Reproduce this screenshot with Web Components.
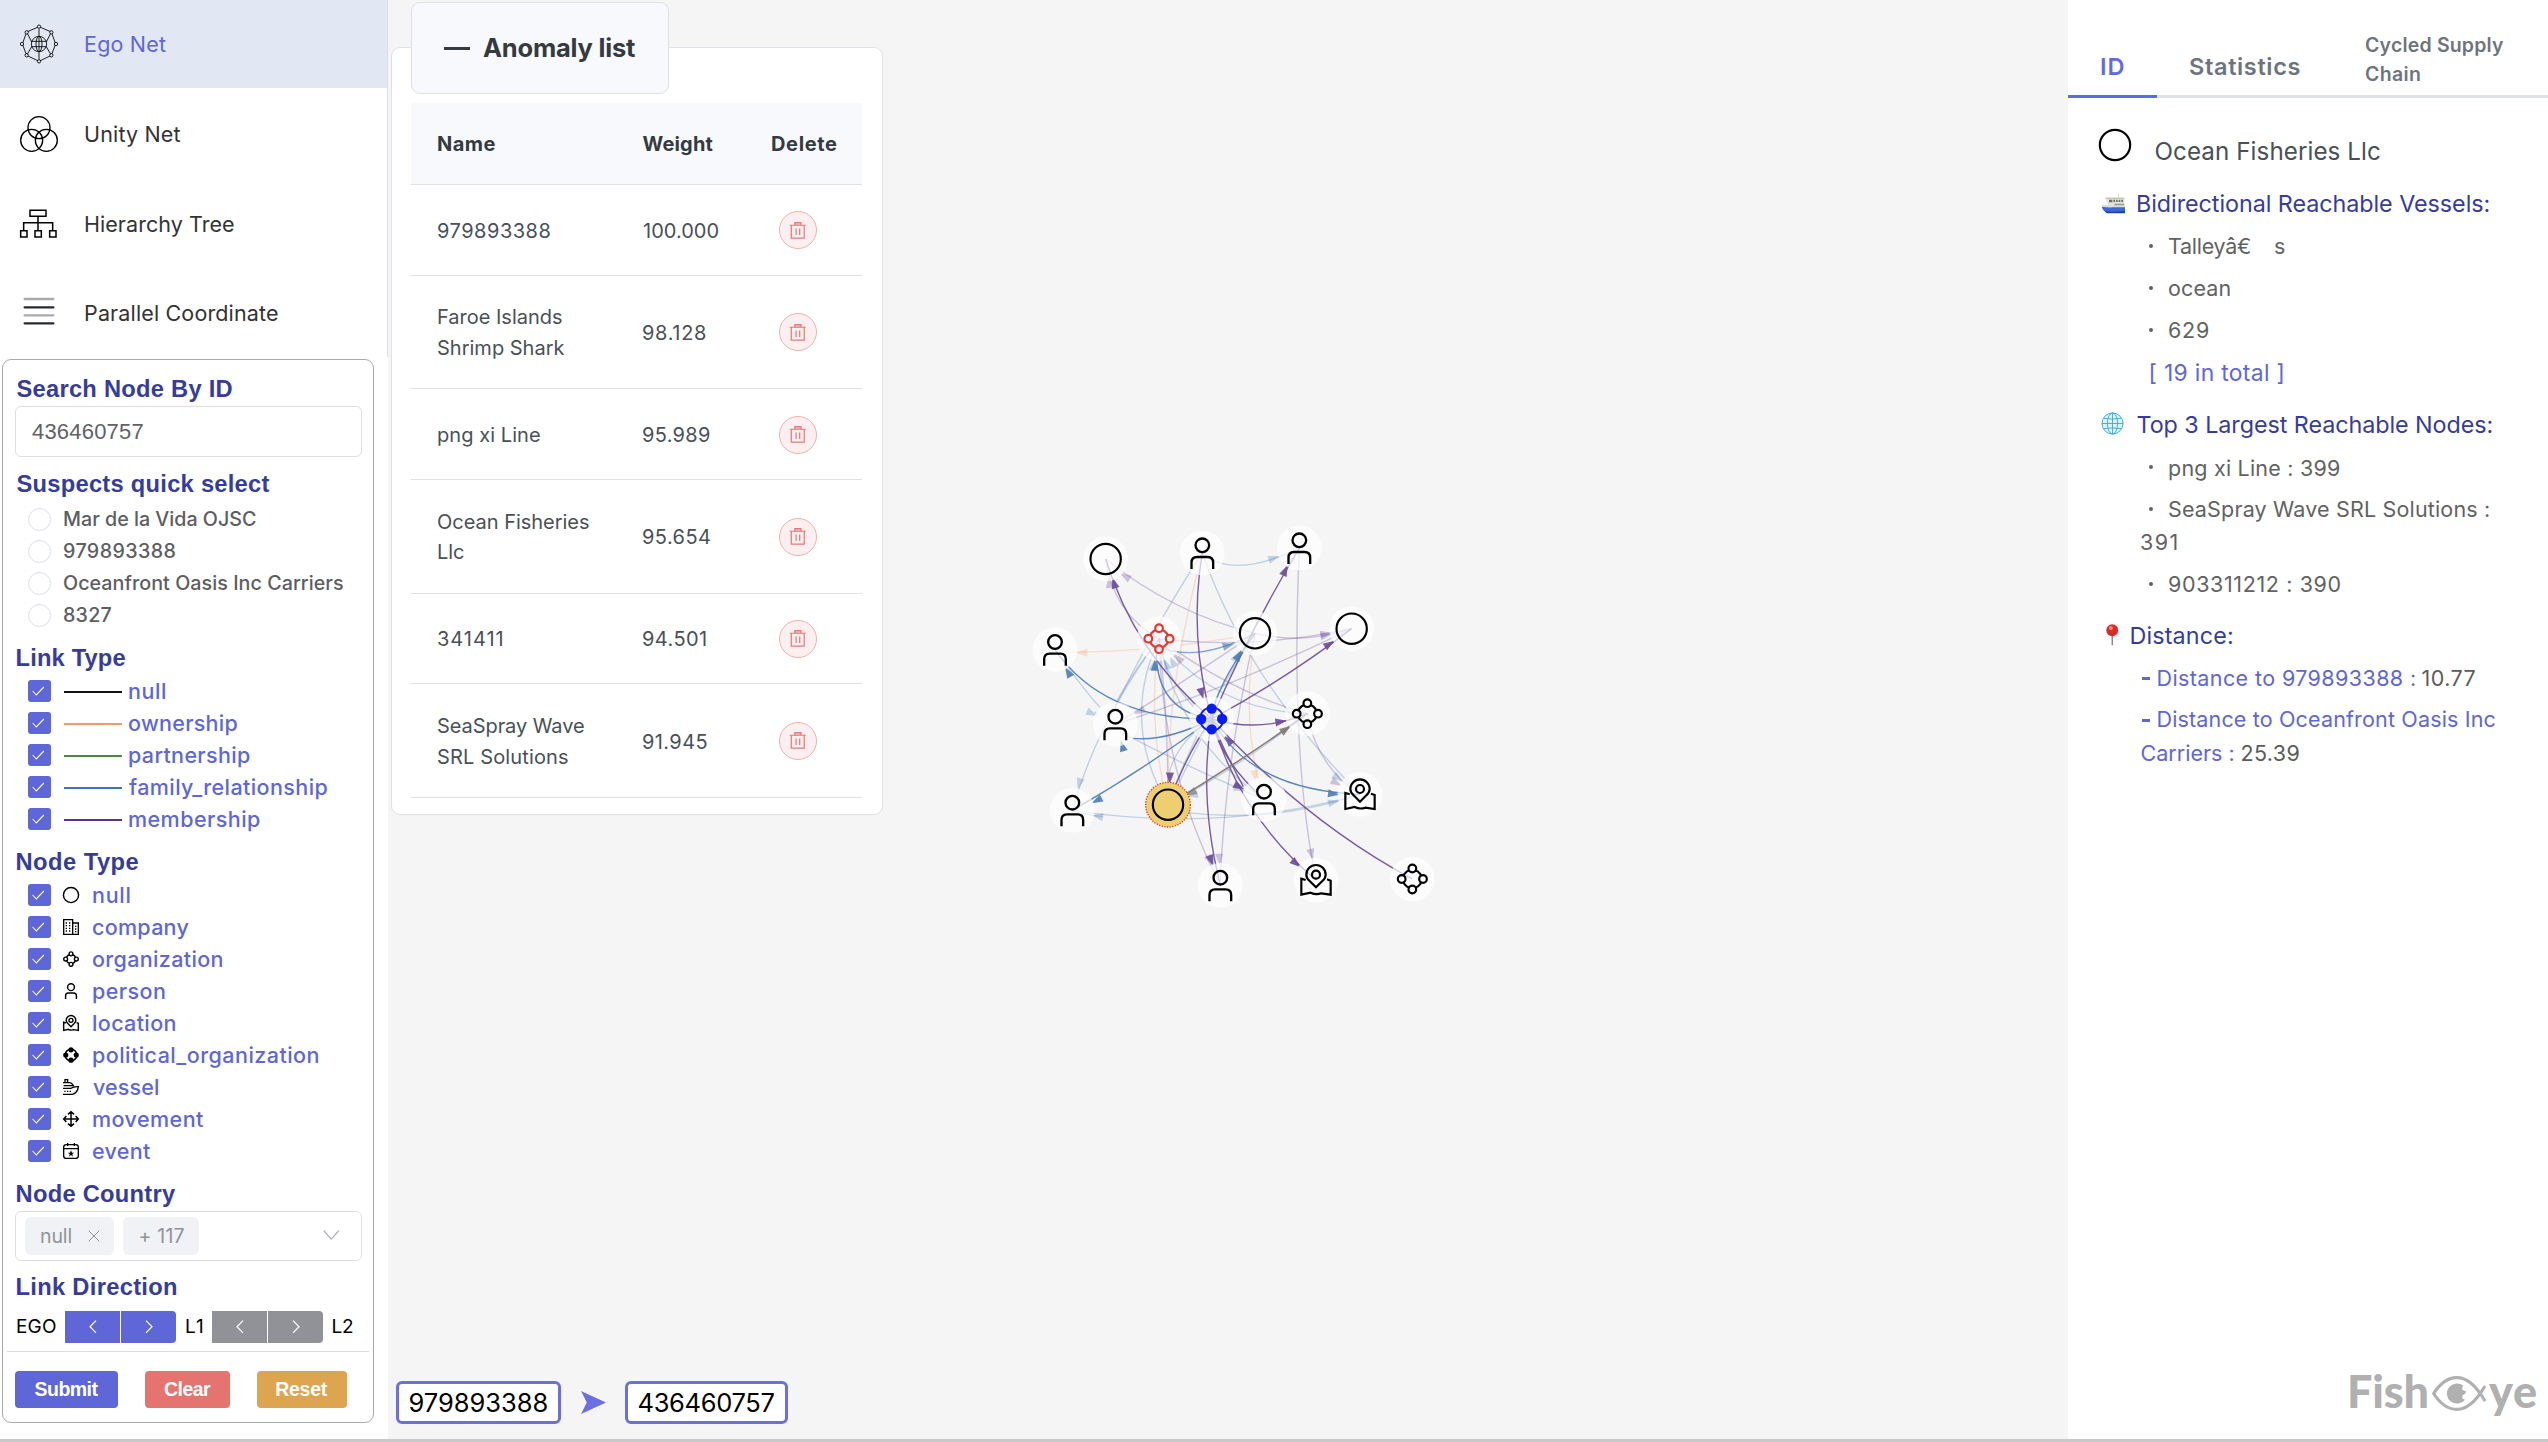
<!DOCTYPE html>
<html lang="en">
<head>
<meta charset="utf-8">
<title>FishEye - Ego Net</title>
<style>
html,body{margin:0;height:100%;background:#fff}
body{font-family:Inter,"Noto Sans",sans-serif;overflow:hidden}
</style>
</head>
<body>
<fish-app></fish-app>
<script>
const pen = document.createElement('canvas').getContext('2d');

/* Text whose drawn width is set: letter spacing takes up the difference. */
class FitText extends HTMLElement {
  connectedCallback() {
    if (!this.shadowRoot) {
      this.attachShadow({mode: 'open'}).innerHTML =
        '<style>:host{display:block;white-space:pre;flex:none;line-height:1.2;padding-top:var(--drop,2px)}span{display:block}</style><span><slot></slot></span>';
    }
    const w = parseFloat(this.getAttribute('w'));
    const cs = getComputedStyle(this);
    const text = this.textContent;
    pen.font = `${cs.fontWeight} ${cs.fontSize} ${cs.fontFamily}`;
    const m = pen.measureText(text);
    const ink = m.actualBoundingBoxLeft + m.actualBoundingBoxRight;
    const span = this.shadowRoot.querySelector('span');
    this.style.width = w + 'px';
    span.style.marginLeft = m.actualBoundingBoxLeft + 'px';
    if (text.length > 1) span.style.letterSpacing = ((w - ink) / (text.length - 1)).toFixed(3) + 'px';
  }
}

const SHAPES = {
  circle: '<circle r="45.5" stroke-width="6.5"/>',
  person: '<circle cy="-23" r="20.5" stroke-width="7"/><path stroke-width="7" d="M-32.5 48V29Q-32.5 12-16 12H16Q32.5 12 32.5 29V48"/>',
  org: '<g stroke-width="6.5"><circle cy="-31.500" r="11.500"/><circle cx="32" r="11.500"/><circle cy="31.500" r="11.500"/><circle cx="-32" r="11.500"/><path d="M10-25L16-23L24-15L26-9M26 9L24 15L16 23L10 25M-10 25L-16 23L-24 15L-26 9M-26-9L-24-15L-16-23L-10-25"/></g>',
  politic: '<g fill="currentColor" stroke="none"><circle cy="-31" r="15.500"/><circle cx="31.500" r="15.500"/><circle cy="31" r="15.500"/><circle cx="-31.500" r="15.500"/></g><circle r="35" stroke-width="5.500"/>',
  location: '<g stroke-width="6.5"><circle cy="-16" r="12"/><path d="M0 22L-19 3Q-29-6-29-16A29 29 0 0 1 29-16Q29-6 19 3Z"/><path d="M-31 0L-44 -4V44L-16 38Q0 46 16 40L44 44V2L33-2"/></g>'
};
const ICONS = {
  ...Object.fromEntries(Object.entries(SHAPES).map(([k, v]) => [k, ['-48 -48 96 96', v]])),
  ego: ['-60 -60 120 120', `<g stroke-width="2.6"><circle r="23"/><ellipse rx="9" ry="23"/><path d="M0-46V46M-22-8H22M-22 8H22M0-52L-37-36L-50 0L-37 34L0 52L37 34L50 0L37-36ZM-37-36L-22-6M-37 34L-22 8M37-36L22-6M37 34L22 8"/></g><g stroke-width="2.6" fill="#e1e8f4"><circle cy="-52" r="5"/><circle cy="52" r="5"/><circle cx="-51" r="5"/><circle cx="51" r="5"/><circle cx="-37" cy="-35" r="5"/><circle cx="37" cy="-35" r="5"/><circle cx="-37" cy="34" r="5"/><circle cx="37" cy="34" r="5"/></g>`],
  unity: ['-60 -60 120 120', '<g stroke-width="4"><circle cy="-19" r="33"/><circle cx="-22" cy="19" r="33"/><circle cx="22" cy="19" r="33"/></g>'],
  tree: ['-60 -60 120 120', '<path stroke-width="4.500" d="M-27-41H21V-23H-27ZM-3-23V20M-46 20V-4H41V20M-55 20H-36V39H-55ZM-12 20H7V39H-12ZM32 20H51V39H32Z"/>'],
  lines: ['-60 -60 120 120', '<g stroke-width="7" stroke-linecap="round"><path stroke="#aaa" d="M-43-42H43M-43 7H43"/><path stroke="#262a33" d="M-43-17H43M-43 31H43"/></g>'],
  company: ['0 0 48 48', '<path stroke-width="4" d="M2 46V2H29V46ZM29 12H46V46H29"/><path stroke-width="4" stroke-dasharray="4 4" d="M10 10V40M20 10V40"/><path stroke-width="4" stroke-dasharray="4 4" d="M38 20V40"/>'],
  vessel: ['0 0 48 48', '<path stroke-width="4" d="M0 11H20Q27 12 31 20H2M6 10V2H14V10M0 28H24Q32 22 46 23Q44 42 28 46H0"/><path stroke-width="4" stroke-dasharray="4 4" d="M4 37H24"/>'],
  movement: ['0 0 48 48', '<path stroke-width="4.500" d="M24 2V46M2 24H46M15 10L24 2L33 10M15 38L24 46L33 38M10 15L2 24L10 33M38 15L46 24L38 33"/>'],
  event: ['0 0 48 48', '<path stroke-width="4" d="M10 5H38Q46 5 46 13V38Q46 46 38 46H10Q2 46 2 38V13Q2 5 10 5ZM2 17H46M14 0V9M34 0V9"/><path fill="currentColor" stroke="none" d="M24 22L27 29H34L28 33L30 41L24 36L18 41L20 33L14 29H21Z"/>'],
  trash: ['0 0 54 54', '<g stroke-width="3.800"><path d="M2 10H52M7 10V50H47V10M22 20V40M33 20V40"/><path fill="currentColor" fill-opacity=".45" d="M18 10V2H37V10"/></g>'],
  check: ['0 0 38 30', '<path stroke-width="3.300" d="M2 15L13 27L36 3"/>'],
  left: ['0 0 24 40', '<path stroke-width="3.600" d="M21 2L3 20L21 38"/>'],
  right: ['0 0 24 40', '<path stroke-width="3.600" d="M3 2L21 20L3 38"/>'],
  down: ['0 0 50 32', '<path stroke-width="3.600" d="M2 2L25 29L48 2"/>'],
  close: ['0 0 36 36', '<path stroke-width="3" d="M2 2L34 34M34 2L2 34"/>'],
  dart: ['0 0 26 24', '<path fill="currentColor" stroke="none" d="M0 0L26 12L0 24L6 12Z"/>'],
  boat: ['0 0 72 66', `<g stroke="none"><rect x="52" y="0" width="2" height="14" fill="#d9d2c4"/><path fill="#e8e2d4" d="M14 14H70V42H22L18 28Z"/><path fill="#c9c1ae" d="M14 14H70V18H14Z"/><path fill="#5f7178" d="M24 20H34V28H24ZM37 20H42V27H37ZM45 20H50V27H45ZM53 20H58V27H53ZM61 20H66V27H61Z"/><path fill="#9aa29c" d="M40 32H70V37H40Z"/><path fill="#dcdad2" d="M2 36Q20 34 34 40H72V46H6Z"/><path fill="#3d69d8" d="M2 41Q20 44 36 43H72V60H18Q6 54 2 41Z"/><path fill="#1d3fa6" d="M12 55Q40 58 72 54V61H18Z"/></g>`],
  globe: ['-36 -36 72 72', '<circle r="34" fill="#d9f3fb" stroke="none"/><g stroke="#46acd0" stroke-width="3"><circle r="33"/><ellipse rx="16" ry="33"/><path d="M0-33V33M-33 0H33M-28-16Q0-12 28-16M-28 16Q0 12 28 16"/></g>'],
  pin: ['0 0 38 66', '<path stroke="#8d7a72" stroke-width="4" d="M19 32V64"/><circle cx="19" cy="19" r="18" fill="#dd2a28" stroke="none"/><circle cx="15" cy="12" r="6" fill="#f58d84" stroke="none"/>'],
  eye: ['0 0 168 108', '<g stroke-width="9.500" stroke-linecap="round"><path d="M5 54Q36 5 76 5Q120 5 160 74M5 54Q36 103 76 103Q120 103 160 34"/></g><path fill="currentColor" stroke="none" d="M96 30A31 31 0 1 0 101 73Q92 72 92 64Q92 58 99 56Q104 54 104 47Q92 46 92 38Q92 33 96 30Z"/>']
};

class FishIcon extends HTMLElement {
  connectedCallback() {
    const [box, body] = ICONS[this.getAttribute('name')];
    this.attachShadow({mode: 'open'}).innerHTML =
      `<style>:host{display:block;flex:none}svg{display:block;width:100%;height:100%;overflow:visible}
       :host([heavy]) svg[viewBox^="-48"] :is(circle,path){stroke-width:8.500px}</style>
       <svg viewBox="${box}" fill="none" stroke="currentColor" preserveAspectRatio="none">${body}</svg>`;
  }
}

class NavItem extends HTMLElement {
  connectedCallback() {
    this.attachShadow({mode: 'open'}).innerHTML = `<style>
      :host{display:flex;align-items:center;height:88px;padding-left:19px;gap:26px;color:#333;font-size:21.5px;margin-bottom:1.8px;box-sizing:border-box}
      :host([active]){background:#e1e8f4;color:#5e66d8}
      fish-icon{width:40px;height:40px;color:#000}
      </style><fish-icon name="${this.getAttribute('icon')}"></fish-icon><slot></slot>`;
  }
}

class CheckRow extends HTMLElement {
  connectedCallback() {
    const line = this.getAttribute('line'), icon = this.getAttribute('icon');
    this.attachShadow({mode: 'open'}).innerHTML = `<style>
      :host{display:flex;align-items:center;height:32px;padding-left:13px;color:#5e66d8;font-size:21.5px;font-weight:500}
      .box{width:23px;height:22px;border-radius:3px;background:#5e66d8;display:flex;align-items:center;justify-content:center}
      .box fish-icon{width:12.500px;height:10px;color:#fff;margin-right:2px}
      .line{width:58px;height:2.500px;margin:2px 7px 0 13px;background:${line}}
      .ico{width:16px;height:16px;color:#000;margin:0 14px 0 12px}
      </style><div class="box"><fish-icon name="check"></fish-icon></div>
      ${line ? '<div class="line"></div>' : `<fish-icon heavy class="ico" name="${icon}"></fish-icon>`}<slot></slot>`;
  }
}

class RadioRow extends HTMLElement {
  connectedCallback() {
    this.attachShadow({mode: 'open'}).innerHTML = `<style>
      :host{display:flex;align-items:center;height:32px;padding-left:13px;gap:13px;color:#5d5e61;font-size:19.700px;font-weight:500}
      i{width:23px;height:23px;border:1px solid #dcdfe6;border-radius:50%;box-sizing:border-box;background:#fff}
      </style><i></i><slot></slot>`;
  }
}

class ArrowPair extends HTMLElement {
  connectedCallback() {
    this.attachShadow({mode: 'open'}).innerHTML = `<style>
      :host{display:flex;width:111px;height:32px;gap:1px;color:#fff}
      div{flex:1;display:flex;align-items:center;justify-content:center;background:var(--tone)}
      div:first-child{border-radius:4px 0 0 4px}div:last-child{border-radius:0 4px 4px 0}
      fish-icon{width:8px;height:13.500px}
      </style><div><fish-icon name="left"></fish-icon></div><div><fish-icon name="right"></fish-icon></div>`;
  }
}

const fit = ([t, w]) => `<fit-text w="${w}">${t}</fit-text>`;

class FilterPanel extends HTMLElement {
  connectedCallback() {
    const links = [['null', 36, '#111'], ['ownership', 108.5, '#f39a6b'], ['partnership', 121, '#4a8a3c'], ['family_relationship', 198.5, '#3f74b5'], ['membership', 131, '#553293']];
    const nodes = [['null', 36.5, 'circle'], ['company', 95.5, 'company'], ['organization', 129.5, 'org'], ['person', 72, 'person'], ['location', 82.5, 'location'], ['political_organization', 225.5, 'politic'], ['vessel', 65, 'vessel'], ['movement', 110, 'movement'], ['event', 57, 'event']];
    const radios = [['Mar de la Vida OJSC', 192], ['979893388', 111.5], ['Oceanfront Oasis Inc Carriers', 279], ['8327', 47.5]];
    this.attachShadow({mode: 'open'}).innerHTML = `<style>
      :host{display:flex;flex-direction:column;box-sizing:border-box;width:372px;height:1064px;margin:2px 0 0 2px;border:1px solid #aaa;border-radius:9px;padding:13px 12px 0;background:#fff}
      h3{margin:0 0 3px 1.500px;height:30px;display:flex;align-items:center;font:bold 23.700px "Liberation Sans",Arial,sans-serif;color:#363c9c}
      .field{box-sizing:border-box;width:347px;border:1.500px solid #dcdfe6;border-radius:6px;display:flex;align-items:center}
      .input{height:51px;padding-left:16px;margin-bottom:11px;font:22px "Liberation Sans",Arial,sans-serif;color:#606266}
      .group{margin-bottom:11px}
      .select{height:50px;padding-left:8.500px;gap:9px;margin-bottom:10px;font-size:19.500px;color:#909399}
      .tag{height:38px;background:#f0f2f5;border-radius:6px;display:flex;align-items:center;padding:0 14.500px 0 16.500px;box-sizing:border-box}
      .tag fish-icon{width:12px;height:12px;margin-left:16px}
      .select>fish-icon{width:16.500px;height:10px;margin-left:115px;margin-top:-2px;color:#a8abb2}
      .dir{display:flex;align-items:center;height:32px;margin:7px 0 8px 2px;font-size:19px;color:#000;--drop:1px}
      hr{width:362px;height:1px;border:0;background:#dcdcdc;margin:0 -8px 19px}
      .buttons{display:flex;height:37px;gap:27px;font:bold 19.500px "Liberation Sans",Arial,sans-serif;color:#fff;--drop:0px}
      .buttons div{border-radius:4px;display:flex;align-items:center;justify-content:center}
      </style>
      <h3>${fit(['Search Node By ID', 216])}</h3>
      <div class="field input">${fit(['436460757', 111.5])}</div>
      <h3 style="margin-bottom:5px">${fit(['Suspects quick select', 253])}</h3>
      <div class="group">${radios.map(r => `<radio-row>${fit(r)}</radio-row>`).join('')}</div>
      <h3>${fit(['Link Type', 109])}</h3>
      <div class="group">${links.map(l => `<check-row line="${l[2]}">${fit(l)}</check-row>`).join('')}</div>
      <h3>${fit(['Node Type', 122])}</h3>
      <div class="group">${nodes.map(n => `<check-row icon="${n[2]}">${fit(n)}</check-row>`).join('')}</div>
      <h3>${fit(['Node Country', 159.5])}</h3>
      <div class="field select"><div class="tag">${fit(['null', 30.5])}<fish-icon name="close"></fish-icon></div><div class="tag">${fit(['+ 117', 45])}</div><fish-icon name="down"></fish-icon></div>
      <h3>${fit(['Link Direction', 159.5])}</h3>
      <div class="dir">${fit(['EGO', 39])}<arrow-pair style="--tone:#5e66d8;margin:0 10px 0 9px"></arrow-pair>${fit(['L1', 17])}<arrow-pair style="--tone:#909297;margin:0 9.5px 0 9px"></arrow-pair>${fit(['L2', 20.5])}</div>
      <hr>
      <div class="buttons"><div style="width:103px;background:#5e66d8">${fit(['Submit', 64])}</div><div style="width:85px;background:#e57471">${fit(['Clear', 47])}</div><div style="width:90px;background:#dda550">${fit(['Reset', 51.5])}</div></div>`;
  }
}

class SideBar extends HTMLElement {
  connectedCallback() {
    this.attachShadow({mode: 'open'}).innerHTML = `<style>
      :host{display:block;width:388px;background:#fff;flex:none}
      nav{height:357px;box-sizing:border-box;border-right:1px solid #dcdfe6;overflow:hidden}
      </style><nav>
      <nav-item active icon="ego">${fit(['Ego Net', 81])}</nav-item>
      <nav-item icon="unity">${fit(['Unity Net', 95.5])}</nav-item>
      <nav-item icon="tree">${fit(['Hierarchy Tree', 149])}</nav-item>
      <nav-item icon="lines">${fit(['Parallel Coordinate', 193])}</nav-item>
      </nav><filter-panel></filter-panel>`;
  }
}

class AnomalyRow extends HTMLElement {
  connectedCallback() {
    this.attachShadow({mode: 'open'}).innerHTML = `<style>
      :host{display:flex;align-items:center;box-sizing:border-box;border-bottom:1px solid #dee2e6;padding-left:27px;font-size:20px;color:#495057}
      .name{width:205px;display:flex;flex-direction:column}
      ::slotted(fit-text[slot=name]){line-height:28.500px}
      .weight{width:136px}
      .del{width:38px;height:38px;box-sizing:border-box;border:1px solid #f0b0ae;border-radius:50%;background:#fdefef;color:#e67a77;display:flex;align-items:center;justify-content:center;margin-top:1px}
      .del fish-icon{width:17.500px;height:17.500px}
      </style><div class="name"><slot name="name"></slot></div><div class="weight"><slot name="weight"></slot></div><div class="del"><fish-icon name="trash"></fish-icon></div>`;
  }
}

class AnomalyList extends HTMLElement {
  connectedCallback() {
    const rows = [
      [[['979893388', 112.5]], ['100.000', 75.5]],
      [[['Faroe Islands', 124], ['Shrimp Shark', 126.5]], ['98.128', 63]],
      [[['png xi Line', 102]], ['95.989', 67]],
      [[['Ocean Fisheries', 151], ['Llc', 26]], ['95.654', 67]],
      [[['341411', 64.5]], ['94.501', 63]],
      [[['SeaSpray Wave', 146], ['SRL Solutions', 130]], ['91.945', 63.5]]];
    this.attachShadow({mode: 'open'}).innerHTML = `<style>
      :host{display:block;width:492px;margin-left:3px;padding-top:2px}
      .title{position:relative;z-index:1;margin-left:20px;box-sizing:border-box;width:258px;height:92px;border:1px solid #dee2e6;border-radius:9px;background:#f8f9fc;display:flex;align-items:center;padding-left:32px;gap:13px;font-size:25.500px;font-weight:700;color:#343a40;--drop:0px}
      .title i{width:26px;height:3px;background:#343a40}
      .card{margin-top:-47px;box-sizing:border-box;height:768px;border:1px solid #dee2e6;border-radius:9px;background:#fff;padding:55px 19px 0}
      .head{height:82px;box-sizing:border-box;width:451px;background:#f8f9fc;border-bottom:1px solid #dee2e6;display:flex;align-items:center;padding-left:27px;font-size:20px;font-weight:650;color:#343a40;--drop:0px}
      anomaly-row{width:451px}
      </style>
      <div class="title"><i></i>${fit(['Anomaly list', 152])}</div>
      <div class="card"><div class="head">${fit(['Name', 57.5])}<fit-text w="70" style="margin-left:147px">Weight</fit-text><fit-text w="65" style="margin-left:59.5px">Delete</fit-text></div>
      ${rows.map(([n, w]) => `<anomaly-row style="height:${n.length > 1 ? 113.7 : 90.65}px">${n.map(([t, x]) => `<fit-text slot="name" w="${x}">${t}</fit-text>`).join('')}<fit-text slot="weight" w="${w[1]}">${w[0]}</fit-text></anomaly-row>`).join('')}</div>`;
  }
}

/* Ego network: drawn in units of a third of a pixel. */
class EgoGraph extends HTMLElement {
  connectedCallback() {
    const P = '#6a4a9a', B = '#4a7db8', O = '#f6b48c', G = '#8a7a70', S = .9, W = .3;
    // colour, opacity, start, control, end, then arrow tip and a point behind it
    const edges = [
      [B, W, 547,99, 420,290, 286,560], [B, W, 547,99, 680,480, 1020,823, 968,785, 935,760],
      [B, W, 547,99, 640,180, 838,84, 778,108, 745,120], [B, W, 105,389, 200,520, 240,562],
      [B, W, 417,356, 230,610, 157,871, 173,808, 182,775], [B, W, 417,356, 350,440, 286,550],
      [B, W, 310,640, 500,740, 732,838, 675,813, 640,800], [B, W, 444,854, 300,610, 417,356, 404,418, 398,450],
      [B, W, 444,854, 540,590, 705,340, 660,395, 640,425], [B, W, 417,356, 470,650, 732,838],
      [B, W, 862,581, 580,570, 417,356, 432,416, 445,448], [B, W, 444,854, 420,700, 575,597],
      [B, W, 157,871, 600,940, 1020,823, 958,842, 925,850], [B, W, 500,878, 760,910, 1020,823],
      [B, W, 417,356, 430,480, 560,600, 450,410, 465,440], [B, W, 444,854, 540,660, 575,597],
      [P, W, 705,340, 460,280, 257,117, 300,160, 330,178], [P, W, 417,356, 280,280, 257,117, 266,170, 270,212],
      [P, W, 417,356, 700,390, 995,326, 935,342, 900,350], [P, W, 705,340, 850,375, 995,326, 935,338, 900,344],
      [P, W, 862,581, 640,520, 417,356, 462,402, 485,425], [P, W, 705,340, 500,480, 286,613, 343,582, 372,568],
      [P, W, 995,326, 640,500, 286,613], [P, W, 838,84, 810,700, 888,1080, 879,1020, 870,985],
      [P, W, 862,581, 890,740, 1020,823, 965,797, 932,780], [P, W, 705,340, 610,760, 601,1096, 599,1035, 597,1000],
      [P, W, 417,356, 425,750, 601,1096, 578,1037, 563,1008], [P, W, 417,356, 445,600, 444,854],
      [O, .38, 547,99, 430,540, 447,854, 447,790, 447,755], [O, .38, 705,340, 400,400, 105,396, 168,398, 200,398],
      [O, .38, 417,356, 380,610, 444,854], [O, .38, 705,340, 660,620, 732,838, 708,785, 703,752],
      [B, .65, 417,380, 530,430, 705,340, 642,372, 612,380],
      [P, S, 575,597, 344,400, 257,117, 277,172, 288,208], [P, S, 547,99, 505,348, 575,597, 550,537, 542,508],
      [P, S, 575,597, 690,330, 838,84, 803,135, 788,168], [P, S, 575,597, 800,475, 995,326, 943,362, 916,380],
      [P, S, 575,597, 720,640, 862,581, 800,602, 770,607], [P, S, 575,597, 500,700, 444,854, 449,792, 450,760],
      [P, S, 575,597, 535,830, 601,1096, 580,1038, 568,1005], [P, S, 575,597, 600,720, 732,838, 673,808, 648,795],
      [P, S, 575,597, 600,670, 670,800], [P, S, 575,597, 660,890, 888,1080, 842,1042, 816,1020],
      [P, S, 1177,1077, 850,900, 575,597, 613,647, 635,672],
      [B, S, 575,597, 250,600, 105,389, 135,441, 152,470], [B, S, 575,597, 440,665, 340,655, 302,661, 315,705],
      [B, S, 575,597, 370,750, 157,871, 215,850, 246,833], [B, S, 575,597, 400,570, 410,380, 405,418, 404,450],
      [B, S, 575,597, 585,500, 705,340, 664,390, 648,420], [B, S, 575,597, 690,810, 1020,823, 958,824, 925,820],
      [G, S, 444,854, 655,730, 862,581, 812,618, 780,640], [G, .7, 444,854, 655,730, 862,581, 497,827, 530,810],
      [B, W, 444,854, 660,740, 862,581, 500,830, 538,820], [B, W, 157,871, 160,880, 250,890, 215,886, 250,892],
      [B, W, 225,575, 228,580, 232,584, 232,587, 200,573]];
    const edge = e => {
      const [c, o, x1, y1, cx, cy, x2, y2, tx, ty, bx, by] = e;
      let s = `<path d="M${x1} ${y1}Q${cx} ${cy} ${x2} ${y2}" fill="none" stroke="${c}" stroke-width="4.200" opacity="${o}"/>`;
      if (tx !== undefined) {
        const a = Math.atan2(by - ty, bx - tx), L = 34, H = 12;
        const px = tx + L * Math.cos(a), py = ty + L * Math.sin(a), nx = -Math.sin(a) * H, ny = Math.cos(a) * H;
        s += `<path d="M${tx} ${ty}L${px + nx} ${py + ny}L${px - nx} ${py - ny}Z" fill="${c}" opacity="${o}"/>`;
      }
      return s;
    };
    const nodes = [['circle', 257, 117], ['person', 547, 99], ['person', 838, 84], ['org', 417, 356, '#e8362c'], ['circle', 705, 340], ['circle', 995, 326],
      ['person', 105, 389], ['person', 286, 613], ['politic', 575, 597, '#0a1cf5'], ['org', 862, 581], ['person', 157, 871], ['circle', 444, 854],
      ['person', 732, 838], ['location', 1020, 823], ['person', 601, 1096], ['location', 888, 1080], ['org', 1177, 1077]];
    this.attachShadow({mode: 'open'}).innerHTML = `<style>:host{display:block;width:430px;height:400px}svg{display:block;overflow:visible}</style>
      <svg width="430" height="400" viewBox="0 0 1290 1200">${edges.map(edge).join('')}
      ${nodes.map(([, x, y]) => `<circle cx="${x}" cy="${y}" r="67" fill="#fff" opacity=".68"/>`).join('')}
      <circle cx="444" cy="854" r="67" fill="#edcf72" stroke="#e8362c" stroke-width="4" stroke-dasharray="4 4"/>
      ${nodes.map(([s, x, y, c]) => `<g transform="translate(${x} ${y})" fill="none" color="${c || '#000'}" stroke="currentColor">${SHAPES[s]}</g>`).join('')}</svg>`;
  }
}

class PathTrail extends HTMLElement {
  connectedCallback() {
    this.attachShadow({mode: 'open'}).innerHTML = `<style>
      :host{display:flex;align-items:center;gap:19.500px;padding:0 0 15px 8px}
      div{box-sizing:border-box;height:43px;width:165px;border:3px solid #6a70e3;border-radius:6px;background:#fff;display:flex;align-items:center;justify-content:center;font-size:25.500px;color:#000;--drop:1px}
      fish-icon{width:25px;height:23px;color:#6a70e3}
      </style><div>${fit(['979893388', 138])}</div><fish-icon name="dart"></fish-icon><div style="width:163px">${fit(['436460757', 136])}</div>`;
  }
}

class GraphStage extends HTMLElement {
  connectedCallback() {
    this.attachShadow({mode: 'open'}).innerHTML = `<style>
      :host{position:relative;flex:1;background:#f5f5f5;display:flex;flex-direction:column;justify-content:space-between;min-width:0}
      ego-graph{position:absolute;left:632px;top:520px}
      </style><anomaly-list></anomaly-list><ego-graph></ego-graph><path-trail></path-trail>`;
  }
}

class DetailPanel extends HTMLElement {
  connectedCallback() {
    const item = (mt, parts) => `<div class="row item" style="margin-top:${mt}px"><i></i>${parts.map(fit).join('')}</div>`;
    this.attachShadow({mode: 'open'}).innerHTML = `<style>
      :host{display:flex;flex-direction:column;width:480px;flex:none;background:#fff}
      .tabs{display:flex;height:98px;box-sizing:border-box;border-bottom:3px solid #dee2e6;font-weight:600;font-size:23.500px;color:#6c757d}
      .tabs>div{height:98px;box-sizing:border-box;padding-top:50.500px}
      .tab-id{width:89px;padding-left:33px;border-bottom:3px solid #6069e8;color:#6069e8}
      .tab-st{width:208px;padding-left:33px}
      .tabs .tab-cy{padding-top:30px;font-size:19.500px;--drop:1px}
      .tab-cy fit-text{line-height:28px}
      .row{display:flex;align-items:center;height:30px;box-sizing:border-box}
      .name{margin-top:38px;padding-left:31px;font-size:24.200px;color:#495057;gap:24.500px}
      .name fish-icon{width:32px;height:32px;margin-top:-13px;color:#000}
      .sec{padding-left:32.500px;font-size:23.300px;color:#363c9c;--drop:1px}
      .item{padding-left:81px;font-size:21.500px;color:#626262;gap:24px}
      .item i{width:4px;height:4px;border-radius:50%;background:#626262;margin-right:-8px}
      .plain{padding-left:73px;font-size:21.500px;color:#626262}
      .dist{padding-left:73.500px;font-size:21.500px;color:#5e66d8}
      .dist b{width:8px;height:3px;background:#5e66d8;margin:2px 8px 0 0}
      .dist span{color:#5b5b5b}
      .logo{display:flex;align-items:center;margin-top:auto;padding:0 0 19px 282px;height:58px;box-sizing:content-box;color:#b0b0b0;font:900 45px Lato,"Open Sans",sans-serif;--drop:0px}
      </style>
      <div class="tabs"><div class="tab-id">${fit(['ID', 22.5])}</div><div class="tab-st">${fit(['Statistics', 109.5])}</div><div class="tab-cy">${fit(['Cycled Supply', 139])}${fit(['Chain', 55])}</div></div>
      <div class="row name"><fish-icon name="circle"></fish-icon>${fit(['Ocean Fisheries Llc', 224.5])}</div>
      <div class="row sec" style="margin-top:22.5px"><fish-icon name="boat" style="width:24px;height:22px;margin-right:13.5px"></fish-icon>${fit(['Bidirectional Reachable Vessels:', 350.5])}</div>
      ${item(12.7, [['Talleyâ€', 82], ['s', 10]])}
      ${item(11.8, [['ocean', 61.5]])}
      ${item(12, [['629', 40]])}
      <div class="row" style="margin-top:12.4px;padding-left:82.5px;font-size:22.800px;color:#5e66d8;--drop:0px">${fit(['[ 19 in total ]', 132])}</div>
      <div class="row sec" style="margin-top:22.1px"><fish-icon name="globe" style="width:23px;height:23px;margin:0 14px 2px 0"></fish-icon>${fit(['Top 3 Largest Reachable Nodes:', 354])}</div>
      ${item(13, [['png xi Line : 399', 171]])}
      ${item(11.7, [['SeaSpray Wave SRL Solutions :', 320]])}
      <div class="row plain" style="margin-top:3px">${fit(['391', 35.5])}</div>
      ${item(12, [['903311212 : 390', 171.5]])}
      <div class="row sec" style="margin-top:21.6px;padding-left:38px"><fish-icon name="pin" style="width:12.500px;height:22px;margin:0 13px 2px 0"></fish-icon>${fit(['Distance:', 100.5])}</div>
      <div class="row dist" style="margin-top:12.2px"><b></b>${fit(['Distance to 979893388 :', 257.5])}<span style="margin-left:7.5px">${fit(['10.77', 53])}</span></div>
      <div class="row dist" style="margin-top:11.4px"><b></b>${fit(['Distance to Oceanfront Oasis Inc', 338])}</div>
      <div class="row dist" style="margin-top:3.6px">${fit(['Carriers :', 92])}<span style="margin-left:8px">${fit(['25.39', 58])}</span></div>
      <div class="logo">${fit(['Fish', 77.5])}<fish-icon name="eye" style="width:55px;height:35px;margin:4px 2.5px 0 4px"></fish-icon>${fit(['ye', 47])}</div>`;
  }
}

class FishApp extends HTMLElement {
  connectedCallback() {
    this.attachShadow({mode: 'open'}).innerHTML = `<style>
      :host{display:flex;flex-direction:column;width:2548px;height:1442px;overflow:hidden}
      main{flex:1;display:flex;min-height:0}
      footer{height:3px;background:#c9c9c9}
      </style><main><side-bar></side-bar><graph-stage></graph-stage><detail-panel></detail-panel></main><footer></footer>`;
  }
}

for (const [tag, cls] of [['fit-text', FitText], ['fish-icon', FishIcon], ['nav-item', NavItem], ['check-row', CheckRow], ['radio-row', RadioRow], ['arrow-pair', ArrowPair],
  ['filter-panel', FilterPanel], ['side-bar', SideBar], ['anomaly-row', AnomalyRow], ['anomaly-list', AnomalyList], ['ego-graph', EgoGraph], ['path-trail', PathTrail],
  ['graph-stage', GraphStage], ['detail-panel', DetailPanel], ['fish-app', FishApp]]) customElements.define(tag, cls);
</script>
</body>
</html>
